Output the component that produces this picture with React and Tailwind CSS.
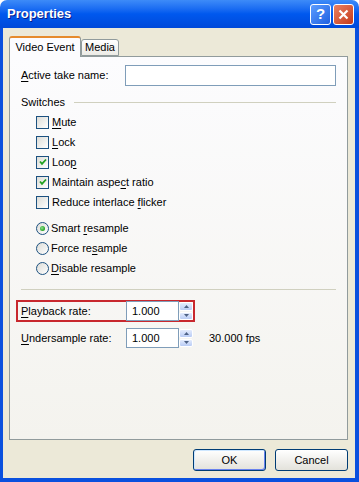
import React from 'react';

const CheckBox = ({ checked }) => (
  <span className="w-[13px] h-[13px] shrink-0 border border-[#1C5180] bg-gradient-to-br from-[#DCDCD7] to-white flex items-center justify-center">
    {checked && (
      <svg width="8" height="8" viewBox="0 0 8 8">
        <path d="M1 3.5 L3 5.8 L7 1.5" stroke="#21A121" strokeWidth="1.8" fill="none" />
      </svg>
    )}
  </span>
);

const Radio = ({ checked }) => (
  <span className="w-[13px] h-[13px] shrink-0 rounded-full border border-[#1C5180] bg-gradient-to-br from-[#DCDCD7] to-white flex items-center justify-center">
    {checked && <span className="w-[5px] h-[5px] rounded-full bg-[radial-gradient(circle_at_40%_40%,#8DE08D,#21A121_70%)]" />}
  </span>
);

const CheckRow = ({ checked, children }) => (
  <div className="h-[20px] flex items-center gap-[3px]">
    <CheckBox checked={checked} />
    <span>{children}</span>
  </div>
);

const RadioRow = ({ checked, children }) => (
  <div className="h-[20px] flex items-center gap-[2px]">
    <Radio checked={checked} />
    <span>{children}</span>
  </div>
);

const Spinner = () => (
  <div className="w-[14px] h-[20px] flex flex-col gap-px py-px">
    <div className="flex-1 rounded-[2px] bg-gradient-to-b from-[#E4ECFD] to-[#B9CCF5] border border-white flex items-center justify-center">
      <svg width="5" height="3" viewBox="0 0 5 3"><path d="M0 3 L2.5 0 L5 3 Z" fill="#4D6185" /></svg>
    </div>
    <div className="flex-1 rounded-[2px] bg-gradient-to-b from-[#E4ECFD] to-[#B9CCF5] border border-white flex items-center justify-center">
      <svg width="5" height="3" viewBox="0 0 5 3"><path d="M0 0 L2.5 3 L5 0 Z" fill="#4D6185" /></svg>
    </div>
  </div>
);

const NumberField = ({ value }) => (
  <div className="flex items-center">
    <div className="w-[53px] h-[20px] border border-[#7F9DB9] bg-white flex items-center pl-[5px]">{value}</div>
    <Spinner />
  </div>
);

const U = ({ children }) => <span className="underline underline-offset-[2px]">{children}</span>;

export default function App() {
  return (
    <div className="w-[359px] h-[482px] bg-white flex flex-col font-['Liberation_Sans',Arial,sans-serif] text-[11px] text-black">
      {/* title bar */}
      <div className="h-[28px] shrink-0 rounded-t-[7px] bg-gradient-to-b from-[#3D8BF8] via-[#0058EE] to-[#0049D9] flex items-center pl-[7px] pr-[5px]">
        <span className="flex-1 text-white font-bold text-[13px] [text-shadow:1px_1px_0_#0A1E8C]">Properties</span>
        <div className="flex gap-[2px]">
          <div className="w-[21px] h-[21px] rounded-[3px] border border-white bg-gradient-to-br from-[#5C9DFF] to-[#1F5FE0] flex items-center justify-center text-white font-bold text-[15px]">?</div>
          <div className="w-[21px] h-[21px] rounded-[3px] border border-white bg-gradient-to-br from-[#EA8060] to-[#C43818] flex items-center justify-center">
            <svg width="11" height="11" viewBox="0 0 11 11">
              <path d="M1.5 1.5 L9.5 9.5 M9.5 1.5 L1.5 9.5" stroke="white" strokeWidth="2.2" />
            </svg>
          </div>
        </div>
      </div>

      {/* body */}
      <div className="flex-1 flex flex-col border-l-[3px] border-r-[4px] border-b-[4px] border-[#0A50DE] bg-[#ECE9D8] pl-[6px] pr-[7px] pt-[8px]">
        {/* tabs */}
        <div className="h-[20px] flex items-start">
          <div className="relative z-10 w-[72px] h-[21px] border border-b-0 border-[#919B9C] border-t-[#E68B2C] border-t-2 rounded-t-[3px] bg-[#FCFCFE] flex items-center justify-center">
            Video Event
          </div>
          <div className="mt-[3px] w-[38px] h-[17px] border border-[#919B9C] rounded-t-[3px] bg-gradient-to-b from-white to-[#ECEBE6] flex items-center justify-center">
            Media
          </div>
        </div>

        {/* panel */}
        <div className="h-[384px] border border-[#919B9C] bg-gradient-to-b from-[#FCFCFE] to-[#F4F3EE] px-[11px] pt-[8px] flex flex-col">
          <div className="h-[21px] flex items-center">
            <span className="w-[105px]"><U>A</U>ctive take name:</span>
            <div className="w-[213px] h-[21px] border border-[#7F9DB9] bg-white" />
          </div>

          <div className="mt-[10px] h-[13px] flex items-center">
            <span>Switches</span>
            <div className="flex-1 h-px bg-[#D0D0BF] ml-[9px]" />
          </div>

          <div className="mt-[3px] pl-[15px] flex flex-col">
            <CheckRow><U>M</U>ute</CheckRow>
            <CheckRow><U>L</U>ock</CheckRow>
            <CheckRow checked>Loo<U>p</U></CheckRow>
            <CheckRow checked>Maintain aspe<U>c</U>t ratio</CheckRow>
            <CheckRow>Reduce interlace <U>f</U>licker</CheckRow>
          </div>

          <div className="mt-[6px] pl-[15px] flex flex-col">
            <RadioRow checked>Smart <U>r</U>esample</RadioRow>
            <RadioRow>Force re<U>s</U>ample</RadioRow>
            <RadioRow><U>D</U>isable resample</RadioRow>
          </div>

          <div className="mt-[11px] h-px bg-[#D0D0BF]" />

          <div className="mt-[10px] -ml-[5px] w-[179px] h-[22px] border-2 border-[#C8282E] flex items-center pl-[3px]">
            <span className="w-[105px]"><U>P</U>layback rate:</span>
            <NumberField value="1.000" />
          </div>

          <div className="mt-[6px] h-[20px] flex items-center">
            <span className="w-[105px]"><U>U</U>ndersample rate:</span>
            <NumberField value="1.000" />
            <span className="ml-[16px]">30.000 fps</span>
          </div>
        </div>

        {/* buttons */}
        <div className="mt-[9px] flex justify-end gap-[9px]">
          <button className="w-[73px] h-[22px] rounded-[3px] border border-[#003C74] bg-gradient-to-b from-white to-[#E3E2DB] shadow-[inset_1px_1px_0_#CEE7FF,inset_-1px_-1px_0_#6982EE] text-[11px]">
            OK
          </button>
          <button className="w-[73px] h-[22px] rounded-[3px] border border-[#003C74] bg-gradient-to-b from-white to-[#E3E2DB] text-[11px]">
            Cancel
          </button>
        </div>
      </div>
    </div>
  );
}
